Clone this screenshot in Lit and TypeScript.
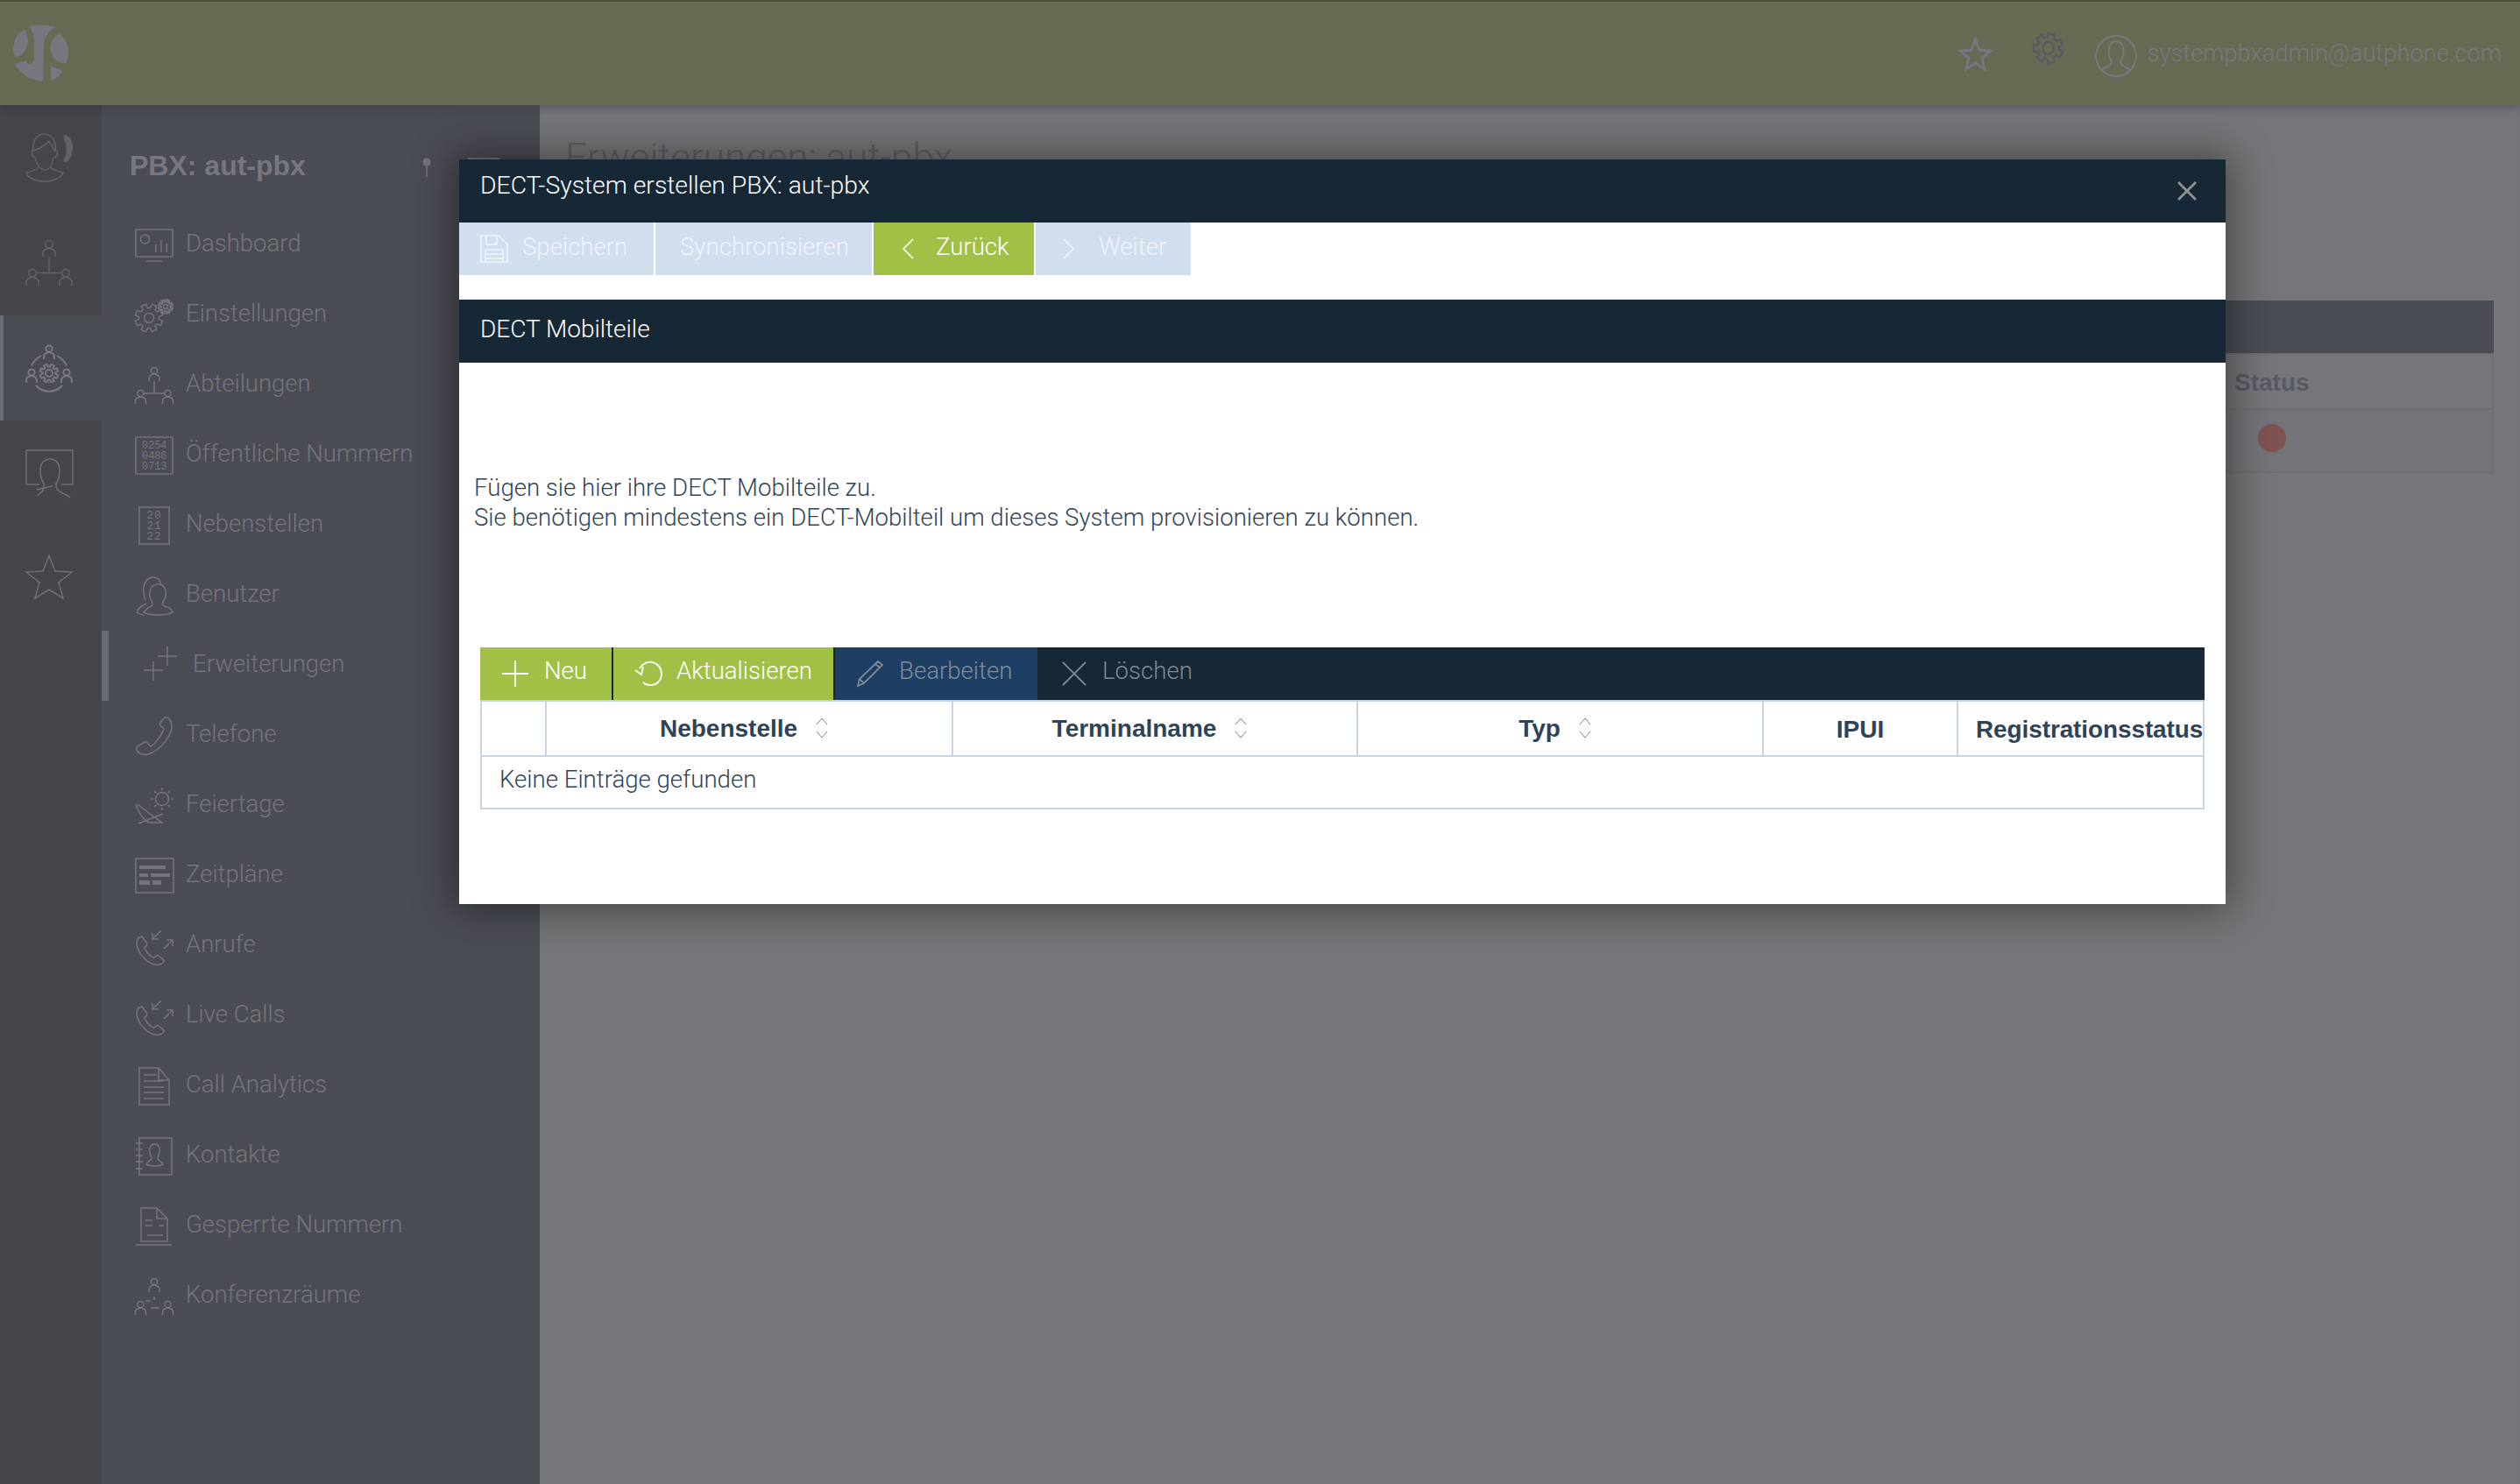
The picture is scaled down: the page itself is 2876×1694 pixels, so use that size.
import { LitElement, html, css, svg } from "lit";
import { customElement } from "lit/decorators.js";

function gear(cx: number, cy: number, r1: number, r2: number, n: number) {
  const pts: string[] = [];
  for (let i = 0; i < n; i++) {
    const a = (i / n) * Math.PI * 2;
    const w = Math.PI / n / 2;
    for (const [r, d] of [[r1, -w * 1.1], [r2, -w * 0.6], [r2, w * 0.6], [r1, w * 1.1]] as number[][]) {
      pts.push(`${(cx + r * Math.cos(a + d)).toFixed(1)} ${(cy + r * Math.sin(a + d)).toFixed(1)}`);
    }
  }
  return "M" + pts.join("L") + "Z";
}
const person = (cx: number, top: number, s = 1) => svg`
  <circle cx=${cx} cy=${top + 4 * s} r=${3.6 * s}/>
  <path d="M${cx - 6 * s} ${top + 16 * s}v${-3 * s}c0-${3 * s} ${2 * s}-${4.5 * s} ${6 * s}-${5 * s}c${4 * s} ${0.5 * s} ${6 * s} ${2 * s} ${6 * s} ${5 * s}v${3 * s}"/>`;
const handset = svg`<path d="M1 8C1 4 4 2 7 1l6 8c1 2-2 4-3 5 2 5 7 10 11 12 2-1 3-4 5-3l7 6c-1 3-4 5-8 5C14 34 1 20 1 8Z"/>`;

const ICONS: Record<string, any> = {
  dashboard: svg`<rect x="1" y="4" width="42" height="31"/><circle cx="11.500" cy="15" r="5"/><path d="M24 30V21M30 30V16M36 30V20M13 40H31"/>`,
  settings: svg`<path d=${gear(16, 25, 16, 11.5, 8)}/><circle cx="16" cy="25" r="5.5"/><g stroke-width="2.4"><path d=${gear(35, 12, 8, 5.5, 8)}/></g><circle cx="35" cy="12" r="2.5"/>`,
  org: svg`${person(22, 1)}<path d="M22 17V31M9 31H35"/>${person(6.5, 27)}${person(37.5, 27)}`,
  numbers: svg`<rect x="1" y="1" width="42" height="42"/><text x="22" y="14" class="dg">0254</text><text x="22" y="26" class="dg">0486</text><text x="22" y="38" class="dg">0713</text>`,
  ext: svg`<rect x="5" y="1" width="34" height="42"/><text x="22" y="14" class="dg2">20</text><text x="22" y="26" class="dg2">21</text><text x="22" y="38" class="dg2">22</text>`,
  users: svg`<path d="M12 27C10 22 9 18 10 12 11 5 16 1 20 1c6 0 9 3 10 8"/><path d="M13 31c-4 2-10 6-11 10 3 2 5 3 8 3"/><path d="M29 9c-6-1-11 2-12 9-1 5 1 9 3 12 1 3-1 4-3 5-3 1-5 3-7 6 8 4 24 4 33 0-1-4-5-6-9-7-3-1-3-3-2-5 3-4 4-9 3-13-1-4-3-6-6-7"/>`,
  plus: svg`<path d="M11 30H33M22 20V42M27 14H49M38 3V25" transform="translate(-1 -3)"/>`,
  phone: svg`<path d="M34 1c3-1 7 2 8 8 1 13-14 30-27 34-5 1-10 0-13-5-1-2 0-3 1-4l8-5c2-1 3 0 4 2l3 3c6-4 13-13 15-20l-3-3c-2-1-2-3-1-4l5-6Z"/>`,
  holiday: svg`<circle cx="31" cy="14" r="7.5"/><path d="M31 1V4M31 24V27M18 14H21M41 14H44M22 5L24.5 7.5M40 5L37.5 7.5M22 23L24.5 20.5M40 23L37.5 20.5M1 20C3 28 10 38 16 41H31L17 31 3 20M4 42L32 31" />`,
  plans: svg`<rect x="1" y="2" width="43" height="39"/><path class="fl" d="M5 9H35V13H5ZM5 18H15V22H5ZM18 18H40V22H18ZM5 26H17V31H5ZM20 26H30V31H20Z" transform="translate(0 1)"/>`,
  calls: svg`<g transform="translate(1 10) scale(.98)">${handset}</g><path d="M30 4L20 14M20 7V14H27M33 25L43 15M36 15H43V22"/>`,
  doc: svg`<path d="M5 1H27L39 15V43H5ZM27 1V15H39M10 9H25M10 16H33M10 23H33M10 29H33M10 36H33"/>`,
  contacts: svg`<rect x="5" y="1" width="37" height="42"/><path d="M1 7H9M1 14H9M1 21H9M1 28H9M1 36H9"/><path d="M23 8c-5 0-7 4-6 9 0 3 2 5 2 7 0 3-4 3-6 7 5 3 14 3 19 0-2-4-6-4-6-7 0-2 2-4 2-7 1-5-1-9-5-9Z"/>`,
  blocked: svg`<path d="M7 39V1H25L37 13V39ZM25 1V13H37M12 21H20M27 21H33M14 32H32M12 15H20M1 43H42"/>`,
  conf: svg`${person(22, 1)}<path d="M12 27H18M22 22V26M18 35H28"/>${person(6.5, 27)}${person(37.5, 27)}`,
};

const ITEMS: [string, string][] = [
  ["Dashboard", "dashboard"], ["Einstellungen", "settings"], ["Abteilungen", "org"],
  ["Öffentliche Nummern", "numbers"], ["Nebenstellen", "ext"], ["Benutzer", "users"],
  ["Erweiterungen", "plus"], ["Telefone", "phone"], ["Feiertage", "holiday"],
  ["Zeitpläne", "plans"], ["Anrufe", "calls"], ["Live Calls", "calls"],
  ["Call Analytics", "doc"], ["Kontakte", "contacts"], ["Gesperrte Nummern", "blocked"],
  ["Konferenzräume", "conf"],
];

const RAIL = [
  svg`<path d="M9 20C7 8 14 0 21 0 29 0 36 7 34 20M9 19C16 17 24 12 27 8 29 12 32 16 34 20M9 18C6 20 8 27 11 27 12 33 17 41 22 41 28 41 31 33 32 27 36 27 38 20 35 18M14 38C14 40 10 42 1 44 3 50 11 54 22 54 33 54 41 50 43 44 34 42 30 40 29 38"/><path class="fl" d="M45 1C50 1 54 8 54 16 54 24 50 32 45 32 43 32 43 28 45 27 47 24 47 10 45 8 43 6 43 1 45 1Z"/>`,
  svg`${person(27, 1, 1.2)}<path d="M27 20V38M12 38.500H42"/>${person(8, 34, 1.2)}${person(46, 34, 1.2)}`,
  svg`${person(27, 1)}${person(7, 28)}${person(47, 28)}<path d=${gear(27, 33, 10.5, 7.5, 8)}/><circle cx="27" cy="33" r="4"/><path d="M18 13C13 16 9 20 7 24M36 13C41 16 45 20 47 24M12 47C20 56 34 56 42 47"/>`,
  svg`<path d="M1 40V1H54V40H41M1 40H16"/><path d="M13 46L31 42M13 53C20 48 22 46 21 39c-3-4-4-9-4-15C17 15 22 11 28 11s11 4 11 13c0 6-1 11-4 15-1 7 3 8 7 11 3 1 7 3 9 5"/>`,
  svg`<path d="M27 1L34 19 53 20 38 32 43 50 27 40 11 50 16 32 1 20 20 19Z"/>`,
];

const CHEV = svg`<path d="M1 8L7 1L13 8M1 16L7 23L13 16"/>`;

@customElement("app-root")
export class AppRoot extends LitElement {
  static styles = css`
    :host { display: block; position: relative; width: 100%; height: 100vh; overflow: hidden; background: #767579;
      font-family: Roboto, "Liberation Sans", Arial, sans-serif; font-weight: 300; font-size: 27.6px; }
    svg { display: block; fill: none; stroke: currentColor; stroke-width: 2; overflow: visible; flex: none; }
    svg .fl { fill: currentColor; stroke: none; }
    svg .dg, svg .dg2 { fill: currentColor; stroke: none; font-family: "Liberation Mono", monospace; text-anchor: middle; }
    svg .dg { font-size: 12.5px; letter-spacing: -.4px; }
    svg .dg2 { font-size: 12.5px; letter-spacing: 1px; }
    .top { position: relative; z-index: 2; height: 120px; box-sizing: border-box; border-top: 2px solid #4d5339; background: #666b53;
      box-shadow: 0 3px 12px rgba(0,0,0,.14); display: flex; align-items: center; color: #76787f; }
    .logo { margin: 0 0 0 15px; width: 64px; height: 66px; stroke: none; color: #77787f; }
    .top-r { margin-left: auto; display: flex; align-items: center; font-size: 27.3px; padding-right: 21px; }
    .star { width: 37px; height: 37px; stroke-width: 3; margin-right: 48px; color: #747680; }
    .cog { width: 33px; height: 36px; color: #565968; margin: -12px 37px 0 0; }
    .ava { width: 48px; height: 48px; margin: 6px 12px 0 0; }
    .body { display: flex; height: calc(100vh - 120px); }
    .rail { width: 116px; background: #464549; flex: none; display: flex; flex-direction: column; }
    .rail-i { height: 120px; display: flex; align-items: center; justify-content: center; color: #6f7075; box-sizing: border-box; padding-right: 4px; }
    .rail-i svg { width: 54px; height: 54px; stroke-width: 1.5; }
    .rail-i.dim { color: #626267; }
    .rail-i.on { background: #4b4d55; box-shadow: inset 4px 0 0 #6b6e78; color: #797a80; }
    .rail-i.on svg { stroke-width: 2; }
    .panel { width: 500px; background: #4b4d55; flex: none; color: #74757b; position: relative; }
    .p-head { height: 120px; display: flex; align-items: center; padding: 18px 0 0 32px; box-sizing: border-box; font-family: "Liberation Sans", Arial, sans-serif; font-weight: 700; font-size: 32px; color: #77787e; }
    .pin { position: absolute; left: 366px; top: 60px; width: 10px; height: 22px; stroke-width: 1.5; }
    .toggle { position: absolute; left: 418px; top: 60px; width: 36px; height: 2px; background: #75767b; }
    .it { height: 80px; display: flex; align-items: center; padding-left: 38px; font-size: 27.5px; white-space: nowrap; color: #74757b; }
    .it svg { width: 44px; height: 44px; stroke-width: 1.5; margin-right: 14px; }
    .it span { margin-top: -6px; }
    .it.on { box-shadow: inset 8px 0 0 #696c75; }
    .it.on svg { margin-right: 22px; }
    .main { flex: 1; padding: 36px 30px 0 29px; min-width: 0; box-shadow: inset 0 8px 10px -6px rgba(0,0,0,.12); }
    h1 { margin: 0; font-weight: 300; font-size: 44px; line-height: 48px; color: #5f6068; }
    .card { margin-top: 139px; border: 2px solid #6f6e72; border-top: 0; }
    .card-h { height: 60px; margin: 0 -2px; background: #4a4d56; }
    .card-r { display: flex; box-sizing: border-box; padding-left: 1903px; align-items: center; font-family: "Liberation Sans", Arial, sans-serif; font-weight: 700; color: #575a64; font-size: 28px; border-top: 2px solid #6f6e72; }
    .r1 { height: 63px; padding-top: 2px; }
    .r2 { height: 72px; background: #747378; padding: 0 0 6px 1930px; }
    .dot { width: 32px; height: 32px; border-radius: 50%; background: #7f5351; }
    .modal { position: absolute; left: 524px; top: 182px; width: 2016px; background: #fff; color: #2f4358;
      box-shadow: 0 0 44px 6px rgba(0,0,0,.42); display: flex; flex-direction: column; }
    .m-title { height: 72px; background: #162836; color: #fff; box-sizing: border-box; padding: 12px 24px 0; line-height: 36px; display: flex; justify-content: space-between; font-size: 28.3px; }
    .x { width: 22px; height: 22px; margin: 13px 9px 0 0; color: #8c8e90; stroke-width: 3; }
    .btns { display: flex; gap: 2px; height: 60px; }
    .b { display: flex; align-items: center; background: #d0deee; color: #eef3f9; box-sizing: border-box; padding-left: 24px; padding-bottom: 5px; }
    .b svg { stroke-width: 1.6; }
    .b1 { width: 222px; } .b1 svg { width: 32px; height: 32px; margin: 5px 16px 0 0; }
    .b2 { width: 247px; padding-left: 28px; }
    .b3 { width: 183px; background: #a2c046; color: #fff; padding-left: 33px; } .b3 svg { width: 13px; height: 24px; margin: 5px 25px 0 0; }
    .b4 { width: 177px; padding-left: 31px; } .b4 svg { width: 13px; height: 24px; margin: 5px 28px 0 0; }
    .sec { height: 72px; margin-top: 28px; background: #162836; color: #fff; display: flex; align-items: center; padding: 0 0 5px 24px; box-sizing: border-box; font-size: 28px; }
    .desc { padding: 126px 17px 132px; line-height: 33.5px; }
    .tb { margin: 0 24px; height: 60px; background: #162836; display: flex; color: #fff; }
    .t { display: flex; align-items: center; box-sizing: border-box; height: 60px; padding-bottom: 7px; }
    .t svg { stroke-width: 1.8; }
    .t1 { width: 150px; background: #a2c046; padding-left: 25px; } .t1 svg { width: 30px; height: 30px; margin: 7px 18px 0 0; }
    .t2 { width: 251px; margin-left: 2px; background: #a2c046; padding-left: 24px; } .t2 svg { width: 32px; height: 28px; margin: 7px 16px 0 0; }
    .t3 { width: 231px; margin-left: 2px; background: #1f3e63; color: #7f8c9a; padding-left: 25px; } .t3 svg { width: 30px; height: 30px; margin: 7px 18px 0 0; }
    .t4 { color: #7f8b94; padding-left: 29px; } .t4 svg { width: 26px; height: 26px; margin: 7px 19px 0 0; }
    .tbl { margin: 0 24px 108px; border: 2px solid #c8d4df; border-top-width: 2px; }
    .hd { display: grid; grid-template-columns: 72px 464px 462px 463px 222px 1fr; height: 61px; border-bottom: 2px solid #c8d4df; font-family: "Liberation Sans", Arial, sans-serif; font-weight: 700; font-size: 28px; color: #2e4358; }
    .c { display: flex; align-items: center; justify-content: center; border-left: 2px solid #c8d4df; box-sizing: border-box; min-width: 0; white-space: nowrap; }
    .c:first-child { border-left: 0; }
    .c svg { width: 14px; height: 24px; stroke-width: 1; color: #7b7f84; margin: -2px 0 0 21px; }
    .c.s { padding: 0 12px 0 0; }
    .c.r { justify-content: flex-start; padding: 3px 0 0 20px; letter-spacing: -.06px; font-size: 27.9px; }
    .c.p { padding-top: 3px; }
    .empty { height: 58px; box-sizing: border-box; padding: 0 0 8px 20px; display: flex; align-items: center; }
  `;

  render() {
    return html`
      <div class="top">
        <svg class="logo" viewBox="0 0 64 66">
          <path class="fl" d="M13 6C5 9 0 18 0 28L2 37C9 37 17 30 17 18 17 13 15 9 13 6Z"/>
          <path class="fl" d="M18 2C27 0 39 0 48 3 43 7 35 12 35 24L34 65C20 64 8 56 2 45 6 44 11 42 15 41 15 44 18 46 20 45 22 44 24 42 24 38L24 18C24 11 21 6 18 2Z"/>
          <path class="fl" d="M53 11C59 16 63 22 63 30 63 35 62 40 61 44 55 44 49 42 46 38 42 32 41 24 45 17 47 14 50 12 53 11Z"/>
          <path class="fl" d="M43 47L57 53C52 59 48 62 43 65Z"/>
        </svg>
        <div class="top-r">
          <svg class="star" viewBox="0 0 37 37"><path d="M18.500 2L23 14 36 15 26 23 29 36 18.500 29 8 36 11 23 1 15 14 14Z"/></svg>
          <svg class="cog" viewBox="0 0 33 36"><path d=${gear(16.5, 18, 17, 12.5, 7)}/><ellipse cx="16.500" cy="18" rx="6" ry="7.500"/></svg>
          <svg class="ava" viewBox="0 0 48 48"><circle cx="24" cy="24" r="23"/><path d="M8 40C12 36 19 36 19 30 16 26 15 20 16 15 17 10 20 7 24 7s7 3 8 8c1 5 0 11-3 15 0 6 7 6 11 10"/></svg>
          <span>systempbxadmin@autphone.com</span>
        </div>
      </div>
      <div class="body">
        <div class="rail">
          ${RAIL.map((r, i) => html`<div class="rail-i ${i === 2 ? "on" : i < 2 ? "dim" : ""}"><svg viewBox="0 0 54 54">${r}</svg></div>`)}
        </div>
        <div class="panel">
          <div class="p-head">PBX: aut-pbx</div>
          <svg class="pin" viewBox="0 0 10 22"><circle class="fl" cx="5" cy="5" r="4.500"/><path d="M5 9V22"/></svg>
          <div class="toggle"></div>
          ${ITEMS.map(([t, ic]) => html`<div class="it ${t === "Erweiterungen" ? "on" : ""}"><svg viewBox="0 0 44 44">${ICONS[ic]}</svg><span>${t}</span></div>`)}
        </div>
        <div class="main">
          <h1>Erweiterungen: aut-pbx</h1>
          <div class="card">
            <div class="card-h"></div>
            <div class="card-r r1">Status</div>
            <div class="card-r r2"><div class="dot"></div></div>
          </div>
        </div>
      </div>
      <div class="modal">
        <div class="m-title"><span>DECT-System erstellen PBX: aut-pbx</span>
          <svg class="x" viewBox="0 0 22 22"><path d="M1 1L21 21M21 1L1 21"/></svg></div>
        <div class="btns">
          <div class="b b1"><svg viewBox="0 0 32 32"><path d="M1 1H21L31 11V31H1ZM7 1V11H19V1M6 31V17H26V31M6 22H26M6 27H26"/></svg>Speichern</div>
          <div class="b b2">Synchronisieren</div>
          <div class="b b3"><svg viewBox="0 0 13 24"><path d="M12 1L1 12L12 23"/></svg>Zurück</div>
          <div class="b b4"><svg viewBox="0 0 13 24"><path d="M1 1L12 12L1 23"/></svg>Weiter</div>
        </div>
        <div class="sec">DECT Mobilteile</div>
        <div class="desc">Fügen sie hier ihre DECT Mobilteile zu.<br>Sie benötigen mindestens ein DECT-Mobilteil um dieses System provisionieren zu können.</div>
        <div class="tb">
          <div class="t t1"><svg viewBox="0 0 30 30"><path d="M0 15H30M15 0V30"/></svg>Neu</div>
          <div class="t t2"><svg viewBox="0 0 32 28"><path d="M6 8C10 2 16 0 21 1 28 3 31 9 31 14 31 22 25 27 19 27 15 27 12 26 10 24M1 10L8 15 10 6"/></svg>Aktualisieren</div>
          <div class="t t3"><svg viewBox="0 0 30 30"><path d="M1 29L3 21 24 1 29 5 8 26ZM3 21L8 26M21 4L26 8"/></svg>Bearbeiten</div>
          <div class="t t4"><svg viewBox="0 0 26 26"><path d="M0 0L26 26M26 0L0 26"/></svg>Löschen</div>
        </div>
        <div class="tbl">
          <div class="hd">
            <div class="c"></div>
            <div class="c s">Nebenstelle<svg viewBox="0 0 14 24">${CHEV}</svg></div>
            <div class="c s">Terminalname<svg viewBox="0 0 14 24">${CHEV}</svg></div>
            <div class="c s">Typ<svg viewBox="0 0 14 24">${CHEV}</svg></div>
            <div class="c p">IPUI</div>
            <div class="c r">Registrationsstatus</div>
          </div>
          <div class="empty">Keine Einträge gefunden</div>
        </div>
      </div>
    `;
  }
}
